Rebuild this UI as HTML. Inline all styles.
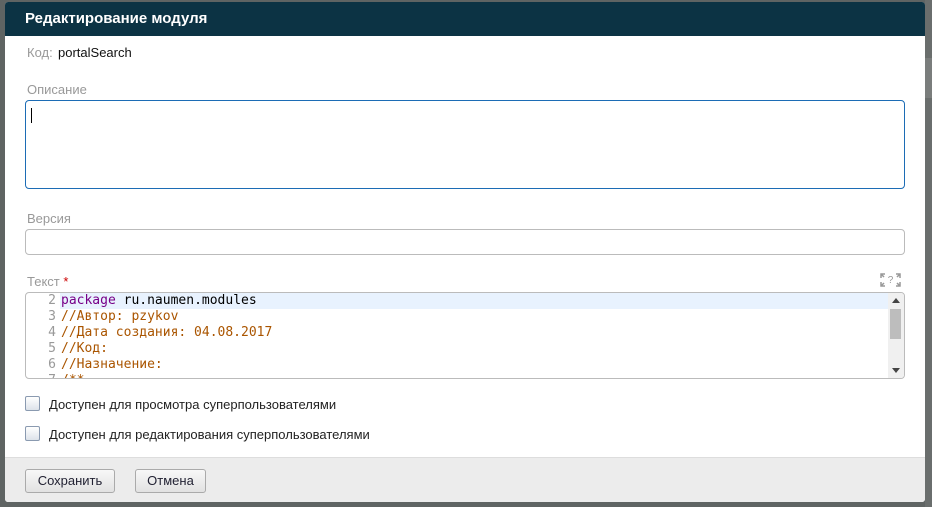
<!DOCTYPE html>
<html><head><meta charset="utf-8"><style>
*{box-sizing:border-box}
body{margin:0;width:932px;height:507px;background:#5f6463;position:relative;overflow:hidden;font-family:"Liberation Sans","DejaVu Sans",sans-serif}
.bgr{position:absolute;left:925px;top:0;width:7px;height:507px;background:#6a6e6d}
.bgr2{position:absolute;left:925px;top:58px;width:7px;height:40px;background:#7a7d7c}
.dlg{position:absolute;left:5px;top:2px;width:920px;height:500px;background:#fff;border-radius:3px;overflow:hidden}
.hd{height:34px;background:#0c3344;color:#fff;font-weight:bold;font-size:15px;line-height:34px;padding-left:20px}
.lbl{position:absolute;color:#999;font-size:13px}
.box{position:absolute;left:20px;width:880px;border:1px solid #bbb;border-radius:4px}
.code{position:absolute;left:20px;top:290px;width:880px;height:87px;border:1px solid #bbb;border-radius:4px;overflow:hidden;font-family:"DejaVu Sans Mono",monospace;font-size:13px}
.ln{height:16px;line-height:16px;white-space:pre}
.n{display:inline-block;width:35px;text-align:right;color:#999;padding-right:5px}
.kw{color:#770088}.c{color:#aa5500}
.sb{position:absolute;right:0;top:0;width:16px;height:100%;background:#f0f0f0}
.cb{position:absolute;left:20px;width:15px;height:15px;border:1px solid #8a9ab0;border-radius:2px;background:linear-gradient(#fff,#dde3ea)}
.ct{position:absolute;left:44px;font-size:13px;color:#222}
.ft{position:absolute;left:0;top:455px;width:920px;height:45px;background:#ececec;border-top:1px solid #ddd}
.btn{position:absolute;top:11px;height:24px;border:1px solid #aaa;border-radius:3px;background:linear-gradient(#f8f8f8,#e2e2e2);font-size:13px;color:#223;line-height:22px;text-align:center}
</style></head><body>
<div class="bgr"></div><div class="bgr2"></div>
<div class="dlg">
<div class="hd">Редактирование модуля</div>
<div class="lbl" style="left:22px;top:43px">Код:</div>
<div style="position:absolute;left:53px;top:43px;font-size:13px;color:#111">portalSearch</div>
<div class="lbl" style="left:22px;top:80px">Описание</div>
<div class="box" style="top:98px;height:89px;border-color:#1c6cb5"><div style="position:absolute;left:5px;top:7px;width:1px;height:15px;background:#000"></div></div>
<div class="lbl" style="left:22px;top:209px">Версия</div>
<div class="box" style="top:227px;height:26px"></div>
<div class="lbl" style="left:22px;top:272px">Текст <span style="color:#c00">*</span></div>
<svg style="position:absolute;left:875px;top:271px" width="21" height="14" viewBox="0 0 21 14" fill="none" stroke="#999" stroke-width="1.5">
<path d="M1 5V1h4M1 1l3 3M1 9v4h4M1 13l3-3M20 5V1h-4M20 1l-3 3M20 9v4h-4M20 13l-3-3"/>
<text x="10.5" y="10" font-size="10" fill="#999" stroke="none" text-anchor="middle" font-family="Liberation Sans">?</text>
</svg>
<div class="code">
<div style="position:absolute;left:34px;top:0;right:16px;height:16px;background:#e8f2fe"></div>
<div style="position:relative">
<div class="ln"><span class="n">2</span><span class="kw">package</span> ru.naumen.modules</div>
<div class="ln"><span class="n">3</span><span class="c">//Автор: pzykov</span></div>
<div class="ln"><span class="n">4</span><span class="c">//Дата создания: 04.08.2017</span></div>
<div class="ln"><span class="n">5</span><span class="c">//Код:</span></div>
<div class="ln"><span class="n">6</span><span class="c">//Назначение:</span></div>
<div class="ln"><span class="n">7</span><span class="c">/**</span></div>
</div>
<div class="sb">
<svg style="position:absolute;left:4px;top:5px" width="8" height="5"><path d="M0 5L4 0L8 5Z" fill="#444"/></svg>
<div style="position:absolute;left:2px;top:16px;width:11px;height:30px;background:#bdbdbd"></div>
<svg style="position:absolute;left:4px;top:75px" width="8" height="5"><path d="M0 0L4 5L8 0Z" fill="#444"/></svg>
</div>
</div>
<div class="cb" style="top:394px"></div><div class="ct" style="top:395px">Доступен для просмотра суперпользователями</div>
<div class="cb" style="top:424px"></div><div class="ct" style="top:425px">Доступен для редактирования суперпользователями</div>
<div class="ft">
<div class="btn" style="left:20px;width:90px">Сохранить</div>
<div class="btn" style="left:130px;width:71px">Отмена</div>
</div>
</div>
</body></html>
